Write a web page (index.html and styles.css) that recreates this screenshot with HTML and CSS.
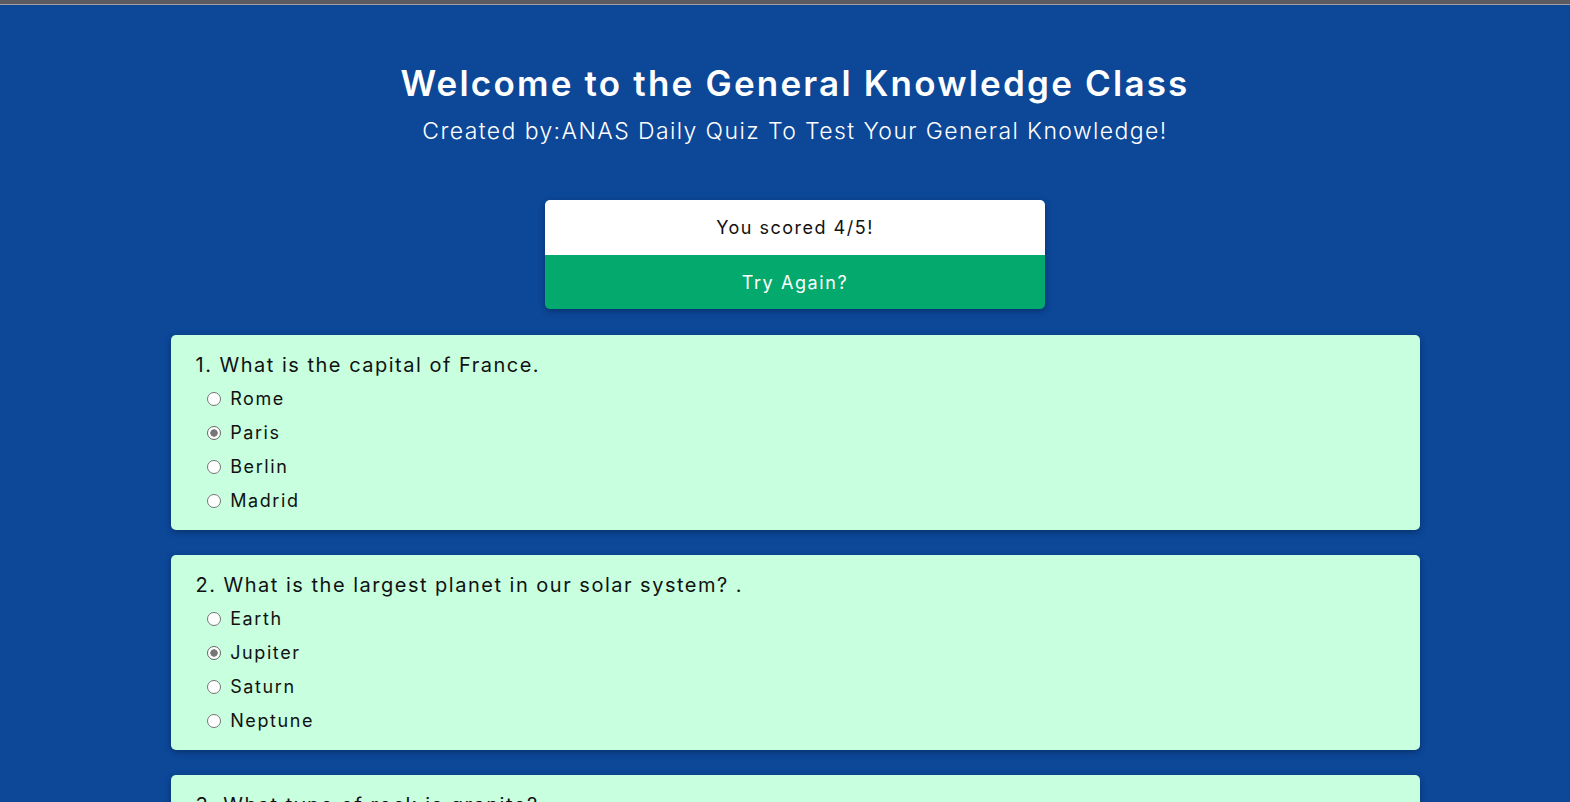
FILE: index.html
```html
<!DOCTYPE html>
<html>
<head>
<meta charset="utf-8">
<link rel="stylesheet" href="styles.css">
</head>
<body>
<div class="chrome"></div>
<div class="page">
  <header class="header">
    <h1 class="title">Welcome to the General Knowledge Class</h1>
    <p class="subtitle">Created by:ANAS Daily Quiz To Test Your General Knowledge!</p>
  </header>
  <div class="score">
    <div class="score-text">You scored 4/5!</div>
    <button class="retry">Try Again?</button>
  </div>
  <main class="quiz">
    <section class="card">
      <div class="question">1. What is the capital of France.</div>
      <div class="options">
        <label class="option"><input type="radio" name="q1" disabled> Rome</label>
        <label class="option"><input type="radio" name="q1" disabled checked> Paris</label>
        <label class="option"><input type="radio" name="q1" disabled> Berlin</label>
        <label class="option"><input type="radio" name="q1" disabled> Madrid</label>
      </div>
    </section>
    <section class="card">
      <div class="question">2. What is the largest planet in our solar system? .</div>
      <div class="options">
        <label class="option"><input type="radio" name="q2" disabled> Earth</label>
        <label class="option"><input type="radio" name="q2" disabled checked> Jupiter</label>
        <label class="option"><input type="radio" name="q2" disabled> Saturn</label>
        <label class="option"><input type="radio" name="q2" disabled> Neptune</label>
      </div>
    </section>
    <section class="card">
      <div class="question">3. What type of rock is granite?</div>
      <div class="options">
        <label class="option"><input type="radio" name="q3" disabled> Sedimentary</label>
        <label class="option"><input type="radio" name="q3" disabled checked> Igneous</label>
        <label class="option"><input type="radio" name="q3" disabled> Metamorphic</label>
        <label class="option"><input type="radio" name="q3" disabled> Mineral</label>
      </div>
    </section>
  </main>
</div>
</body>
</html>
```
FILE: styles.css
```css
html, body {
  margin: 0;
  padding: 0;
}
body {
  background: #0c4798;
  font-family: Inter, "Open Sans", sans-serif;
  color: #111;
  overflow: hidden;
  height: 802px;
}
.chrome {
  height: 4px;
  background: #5a5a60;
  border-bottom: 1px solid #a0a0a4;
}
.page {
  padding-left: 20px;
}
.header {
  text-align: center;
  color: #fff;
  padding-top: 53px;
}
.title {
  margin: 0;
  font-size: 35px;
  font-weight: 600;
  line-height: 50px;
  letter-spacing: 2.2px;
}
.subtitle {
  margin: 5px 0 0;
  font-size: 23px;
  font-weight: 300;
  line-height: 36px;
  letter-spacing: 1.4px;
}
.score {
  width: 500px;
  margin: 51px auto 0;
  border-radius: 5px;
  overflow: hidden;
  box-shadow: 0 2px 6px rgba(0,0,0,0.3);
}
.score-text {
  background: #fff;
  height: 55px;
  display: flex;
  align-items: center;
  justify-content: center;
  font-size: 18px;
  letter-spacing: 1.5px;
}
.retry {
  display: block;
  width: 100%;
  height: 54px;
  border: none;
  background: #04aa6d;
  color: #fff;
  font-family: inherit;
  font-size: 18px;
  letter-spacing: 1.6px;
}
.quiz {
  width: 1249px;
  margin: 26px auto 0;
  display: flex;
  flex-direction: column;
  gap: 25px;
}
.card {
  background: #c7ffdf;
  border-radius: 5px;
  padding: 15px 25px 12px;
  box-shadow: 0 2px 6px rgba(0,0,0,0.3);
}
.question {
  font-size: 20px;
  line-height: 30px;
  margin-bottom: 2px;
  letter-spacing: 1.5px;
}
.options {
  padding-left: 7px;
  display: flex;
  flex-direction: column;
}
.option {
  font-size: 18px;
  line-height: 34px;
  height: 34px;
  letter-spacing: 1.6px;
}
.option input {
  appearance: none;
  -webkit-appearance: none;
  width: 14px;
  height: 14px;
  box-sizing: border-box;
  margin: 0 3px 0 4px;
  border: 1px solid #767676;
  border-radius: 50%;
  background: #fff;
  vertical-align: -1px;
}
.option input:checked {
  background: radial-gradient(circle, #777 0, #777 3.4px, #fff 4px);
  border-color: #666;
}
```
